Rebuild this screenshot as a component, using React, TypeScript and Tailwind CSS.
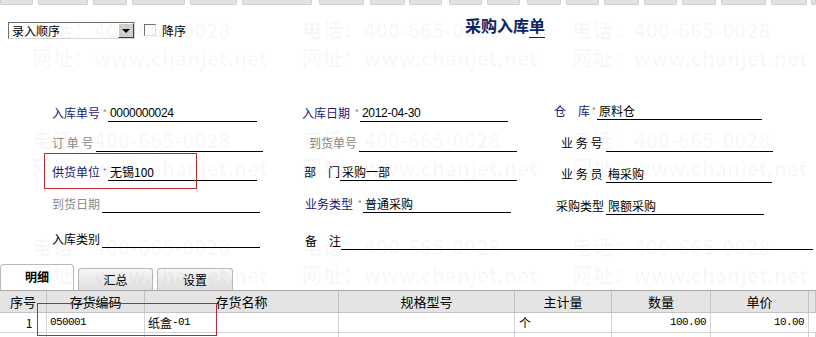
const toolbarSegs = [
  [0, 33], [38, 88], [93, 127], [132, 185], [190, 237], [242, 312], [319, 364], [370, 405], [409, 442],
  [449, 482], [487, 520], [527, 561], [566, 599], [604, 639], [644, 677], [682, 716], [721, 766], [771, 807], [811, 816],
];

type FieldProps = {
  left: number;
  lineStart: number;
  lineWidth: number;
  label: string;
  tone: "navy" | "gray" | "black";
  star?: boolean;
  value?: string;
  mono?: boolean;
  shift?: string;
};

const toneClass = {
  navy: "text-[#1a1a7a]",
  gray: "text-[#8a8a8a]",
  black: "text-black",
};

const Field = ({ left, lineStart, lineWidth, label, tone, star, value, mono, shift = "" }: FieldProps) => {
  return (
    <div className={`flex items-end ${shift}`} style={{ marginLeft: left }}>
      <div className="flex items-end justify-between pb-[2px]" style={{ width: lineStart - left }}>
        <span className={`text-[12px] leading-[14px] whitespace-pre ${toneClass[tone]}`}>{label}</span>
        {star && <span className="text-[9px] leading-[9px] text-[#8a8a8a] mr-[1px] mb-[3px]">*</span>}
      </div>
      <div className="h-[16px] border-b border-black flex items-end pl-[2px] pb-[1px] shrink-0" style={{ width: lineWidth }}>
        {value && (
          <span className={`text-[12px] leading-[14px] text-black ${mono ? "font-['Liberation_Sans','Noto_Sans_CJK_SC',sans-serif] text-[11.5px] tracking-[-0.3px]" : ""}`}>
            {value}
          </span>
        )}
      </div>
    </div>
  );
};

const Watermark = ({ top, left }: { top: number; left: number }) => (
  <div
    aria-hidden="true"
    className="absolute text-[20px] leading-[28px] font-medium text-black/[0.045] font-['Noto_Sans_CJK_SC',sans-serif] tracking-[0.7px] whitespace-nowrap"
    style={{ top, left }}
  >
    <div>电话：400-665-0028</div>
    <div>网址：www.chanjet.net</div>
  </div>
);

const cols = [47, 98, 194, 176, 97, 99, 98, 7];

export default function App() {
  return (
    <div className="relative w-[816px] h-[337px] overflow-hidden bg-white font-['Noto_Sans_CJK_SC',sans-serif]">
      {/* toolbar remnants */}
      <div className="relative h-[5px]">
        {toolbarSegs.map(([a, b]) => (
          <div
            key={a}
            className="absolute top-0 h-[5px] bg-[#e2e2e2] border-b border-x border-[#cfcfcf] rounded-b-[2px]"
            style={{ left: a, width: b - a }}
          />
        ))}
      </div>

      {/* header */}
      <div className="flex h-[93px]">
        <div className="w-[465px] pl-[8px] pt-[17px] flex items-start">
          <div className="w-[127px] h-[17px] flex border border-t-[#6e6e6e] border-l-[#6e6e6e] border-b-[#d8d8d8] border-r-[#d8d8d8] bg-white">
            <span className="flex-1 pl-[3px] text-[12px] leading-[15px] text-black">录入顺序</span>
            <div className="w-[16px] h-[15px] bg-[#d4d0c8] border border-t-white border-l-white border-b-[#404040] border-r-[#404040] flex items-center justify-center">
              <div className="w-0 h-0 border-x-[4px] border-x-transparent border-t-[4px] border-t-black" />
            </div>
          </div>
          <div className="ml-[9px] mt-[2px] w-[12px] h-[12px] border border-t-[#6e6e6e] border-l-[#6e6e6e] border-b-[#e0e0e0] border-r-[#e0e0e0] bg-white" />
          <span className="ml-[6px] mt-[1px] text-[12px] leading-[15px] text-black">降序</span>
        </div>
        <div className="pt-[10px] text-[16px] leading-[20px] font-bold text-[#0b2566] whitespace-nowrap">
          采购入库<span className="border-b border-[#0b2566]">单</span>
        </div>
      </div>

      {/* form */}
      <div className="grid grid-cols-[272px_272px_272px] grid-rows-[24px_30px_29px_32px_37px] items-end">
        <Field left={52} lineStart={108} lineWidth={149} label="入库单号" tone="navy" star value="0000000024" mono />
        <Field left={30} lineStart={88} lineWidth={148} label="入库日期" tone="navy" star value="2012-04-30" mono />
        <Field left={10} lineStart={53} lineWidth={165} label="仓　库" tone="navy" star value="原料仓" shift="mb-[2px]" />

        <Field left={52} lineStart={96} lineWidth={167} label="订 单 号" tone="gray" />
        <Field left={37} lineStart={87} lineWidth={158} label="到货单号" tone="gray" />
        <Field left={17} lineStart={62} lineWidth={167} label="业 务 号" tone="black" />

        <Field left={52} lineStart={108} lineWidth={149} label="供货单位" tone="navy" star value="无锡100" />
        <Field left={32} lineStart={68} lineWidth={177} label="部　门" tone="black" value="采购一部" />
        <Field left={17} lineStart={62} lineWidth={166} label="业 务 员" tone="black" value="梅采购" shift="-mb-[2px]" />

        <Field left={52} lineStart={102} lineWidth={158} label="到货日期" tone="gray" />
        <Field left={33} lineStart={91} lineWidth={148} label="业务类型" tone="navy" star value="普通采购" />
        <Field left={12} lineStart={62} lineWidth={158} label="采购类型" tone="black" value="限额采购" shift="-mb-[2px]" />

        <Field left={52} lineStart={102} lineWidth={158} label="入库类别" tone="black" shift="mb-[2px]" />
        <Field left={33} lineStart={72} lineWidth={472} label="备　注" tone="black" />
        <div />
      </div>

      {/* tabs */}
      <div className="mt-[14px] flex items-end h-[26px] gap-[4px]">
        <div className="w-[74px] h-[26px] bg-white border border-b-0 border-[#b8b8b8] rounded-t-[4px] flex items-center justify-center pb-[2px]">
          <span className="text-[12px] leading-[14px] font-bold text-black">明细</span>
        </div>
        <div className="w-[75px] h-[22px] bg-gradient-to-b from-[#f7f7f7] to-[#dedede] border border-b-0 border-[#b8b8b8] rounded-t-[3px] flex items-center justify-center">
          <span className="text-[12px] leading-[14px] text-black">汇总</span>
        </div>
        <div className="w-[76px] h-[22px] bg-gradient-to-b from-[#f7f7f7] to-[#dedede] border border-b-0 border-[#b8b8b8] rounded-t-[3px] flex items-center justify-center">
          <span className="text-[12px] leading-[14px] text-black">设置</span>
        </div>
      </div>

      {/* table */}
      <div className="border-t border-[#a8a8a8]">
        <div className="flex h-[22px] bg-[#e4e4e4] border-b border-[#c4c4c4]">
          {["序号", "存货编码", "存货名称", "规格型号", "主计量", "数量", "单价", ""].map((h, i) => (
            <div
              key={i}
              className="flex items-center justify-center border-r border-[#c4c4c4] text-[13px] leading-[15px] text-black shrink-0"
              style={{ width: cols[i] }}
            >
              {h}
            </div>
          ))}
        </div>
        <div className="flex h-[20px] border-b border-[#d4d4d4]">
          <div className="flex items-center justify-center pl-[12px] border-r border-[#d4d4d4] text-[12px] shrink-0" style={{ width: cols[0] }}>1</div>
          <div className="flex items-center pl-[3px] border-r border-[#d4d4d4] font-['Liberation_Mono',monospace] text-[11px] tracking-[-0.6px] shrink-0" style={{ width: cols[1] }}>050001</div>
          <div className="flex items-center pl-[3px] border-r border-[#d4d4d4] text-[12px] shrink-0" style={{ width: cols[2] }}>
            纸盒<span className="font-['Liberation_Mono',monospace] text-[11px] tracking-[-0.6px]">-01</span>
          </div>
          <div className="border-r border-[#d4d4d4] shrink-0" style={{ width: cols[3] }} />
          <div className="flex items-center pl-[4px] border-r border-[#d4d4d4] text-[12px] shrink-0" style={{ width: cols[4] }}>个</div>
          <div className="flex items-center justify-end pr-[4px] border-r border-[#d4d4d4] font-['Liberation_Mono',monospace] text-[11px] tracking-[-0.6px] shrink-0" style={{ width: cols[5] }}>100.00</div>
          <div className="flex items-center justify-end pr-[4px] border-r border-[#d4d4d4] font-['Liberation_Mono',monospace] text-[11px] tracking-[-0.6px] shrink-0" style={{ width: cols[6] }}>10.00</div>
          <div className="shrink-0" style={{ width: cols[7] }} />
        </div>
        <div className="flex h-[10px]">
          {cols.map((w, i) => (
            <div key={i} className="border-r border-[#d4d4d4] shrink-0" style={{ width: w }} />
          ))}
        </div>
      </div>

      {/* watermark overlay */}
      <div className="absolute inset-0 pointer-events-none">
        {[16, 126, 233].map((t) =>
          [32, 302, 572].map((l) => <Watermark key={`${t}-${l}`} top={t} left={l} />)
        )}
      </div>

      {/* annotation boxes */}
      <div className="absolute left-[44px] top-[153px] w-[153px] h-[36px] border border-[#c4262b] pointer-events-none" />
      <div className="absolute left-[37px] top-[303px] w-[180px] h-[33px] border border-[#c4262b] pointer-events-none" />
    </div>
  );
}
